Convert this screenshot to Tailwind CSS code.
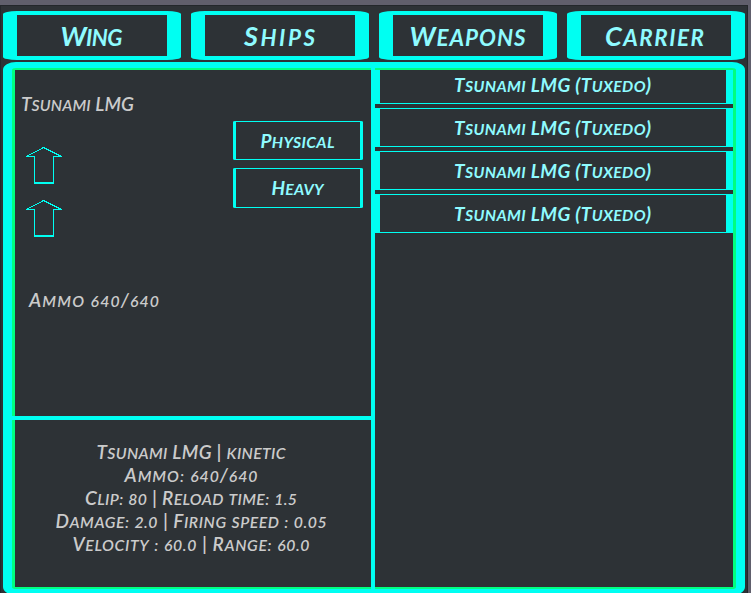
<!DOCTYPE html>
<html lang="en"><head><meta charset="utf-8"><title>Hangar</title>
<script src="https://cdn.jsdelivr.net/npm/@tailwindcss/browser@4"></script></head>
<body class="w-[751px] h-[593px] overflow-hidden bg-[#2d3236] font-['Lato','Open_Sans',sans-serif] italic font-semibold text-[19px] leading-[23px] text-[#cbcbcb]">
<div class="w-[751px] h-[593px] overflow-hidden border-t-[5px] border-r-[3px] border-[#605f6c]">
<div class="h-[588px] border-t border-x border-[#23272b] pt-[5px] pl-[2px]">
<nav class="flex gap-[10px] h-[49px] text-[27px] leading-[41px] font-bold text-[#8ffbff] text-center">
<div class="w-[178px] h-[49px] border-x-[14px] border-y-4 border-[#00fff2] rounded-[14px/3px] pr-px"><span class="fit whitespace-pre" data-w="62">Wing</span></div>
<div class="w-[178px] h-[49px] border-x-[14px] border-y-4 border-[#00fff2] rounded-[14px/3px] pr-px"><span class="fit whitespace-pre" data-w="71">Ships</span></div>
<div class="w-[178px] h-[49px] border-x-[14px] border-y-4 border-[#00fff2] rounded-[14px/3px] pr-px"><span class="fit whitespace-pre" data-w="116">Weapons</span></div>
<div class="w-[178px] h-[49px] border-x-[14px] border-y-4 border-[#00fff2] rounded-[14px/3px] pr-[3px]"><span class="fit whitespace-pre" data-w="99">Carrier</span></div>
</nav>
<main class="mt-[2px] w-[742px] h-[533px] border-x-[9px] border-y-[6px] border-[#00fff2] rounded-[13px/8px] bg-[#00ff80] flex">
<div class="w-[359px] shrink-0 h-[521px] flex flex-col">
<section class="ml-[3px] mt-[2px] w-[356px] h-[346px] bg-[#2d3236] flex justify-between">
<div class="pl-[6px] pt-[22px] flex flex-col items-start">
<span class="fit whitespace-pre h-[23px]" data-w="113">Tsunami LMG</span>
<svg class="ml-[5px] mt-[32px] shrink-0" width="36" height="37" fill="none" stroke="#00fff2" shape-rendering="crispEdges"><path d="M.5 9.5 17.5.5 35.500 9.500H27.500V36H8.500V9.500Z"/><path d="M8 36H28" stroke-width="2"/></svg>
<svg class="ml-[5px] mt-[16px] shrink-0" width="36" height="37" fill="none" stroke="#00fff2" shape-rendering="crispEdges"><path d="M.5 9.500 17.500.5 35.500 9.500H27.500V36H8.500V9.500Z"/><path d="M8 36H28" stroke-width="2"/></svg>
<span class="fit whitespace-pre h-[23px] ml-[8px] mt-[51px]" data-w="130">Ammo 640/640</span>
</div>
<div class="pt-[51px] pr-[8px] flex flex-col gap-[8px] text-center text-[#8ffbff] font-bold">
<div class="w-[130px] h-[39px] border-x-[3px] border-y border-[#00fff2] rounded-[2px/1px] pt-[7px] pr-px"><span class="fit whitespace-pre" data-w="74">Physical</span></div>
<div class="w-[130px] h-[40px] border-x-[3px] border-y border-[#00fff2] rounded-[2px/1px] pt-[7px] pr-px"><span class="fit whitespace-pre" data-w="52">Heavy</span></div>
</div>
</section>
<div class="h-[4px] bg-[#00fff2] shrink-0"></div>
<section class="ml-[3px] w-[356px] h-[167px] bg-[#2d3236] pt-[20px] text-center flex flex-col items-center">
<div class="h-[23px] pr-[4px]"><span class="fit whitespace-pre" data-w="189">Tsunami LMG | kinetic</span></div>
<div class="h-[23px] pr-[4px]"><span class="fit whitespace-pre" data-w="133">Ammo: 640/640</span></div>
<div class="h-[23px] pr-[4px]"><span class="fit whitespace-pre" data-w="212">Clip: 80 | Reload time: 1.5</span></div>
<div class="h-[23px] pr-[4px]"><span class="fit whitespace-pre" data-w="271">Damage: 2.0 | Firing speed : 0.05</span></div>
<div class="h-[23px] pr-[4px]"><span class="fit whitespace-pre" data-w="237">Velocity : 60.0 | Range: 60.0</span></div>
</section>
</div>
<div class="w-[4px] shrink-0 bg-[#00fff2]"></div>
<section class="mt-[2px] w-[358px] h-[517px] bg-[#2d3236] flex flex-col gap-[4px] text-center text-[#8ffbff] font-bold">
<div class="h-[34px] border-l-[5px] border-r-[7px] border-b border-[#00fff2] pt-[3px] pr-px"><span class="fit whitespace-pre" data-w="197">Tsunami LMG (Tuxedo)</span></div>
<div class="h-[39px] border-l-[5px] border-r-[7px] border-y border-[#00fff2] pt-[7px] pr-px"><span class="fit whitespace-pre" data-w="197">Tsunami LMG (Tuxedo)</span></div>
<div class="h-[39px] border-l-[5px] border-r-[7px] border-y border-[#00fff2] pt-[7px] pr-px"><span class="fit whitespace-pre" data-w="197">Tsunami LMG (Tuxedo)</span></div>
<div class="h-[39px] border-l-[5px] border-r-[7px] border-y border-[#00fff2] pt-[7px] pr-px"><span class="fit whitespace-pre" data-w="197">Tsunami LMG (Tuxedo)</span></div>
</section>
</main>
</div></div>
<script>
// Small capitals for lowercase letters and digits
const labels=[...document.querySelectorAll('.fit')];
labels.forEach(e=>{e.innerHTML=e.textContent.replace(/[a-z0-9.:]+/g,'<span class="text-[0.83em] uppercase">$&</span>');});
// Track each label to its set width
function fit(){
 labels.forEach(e=>{
  e.style.letterSpacing='0px'; e.style.marginRight='0px';
  const r=document.createRange(); r.selectNodeContents(e);
  const s=(+e.dataset.w-r.getBoundingClientRect().width)/(e.textContent.length-1);
  e.style.letterSpacing=s+'px'; e.style.marginRight=-s+'px';
 });
}
fit();
addEventListener('load',()=>{fit();requestAnimationFrame(fit);setTimeout(fit,60);});
document.fonts.ready.then(fit);
</script>
</body></html>
